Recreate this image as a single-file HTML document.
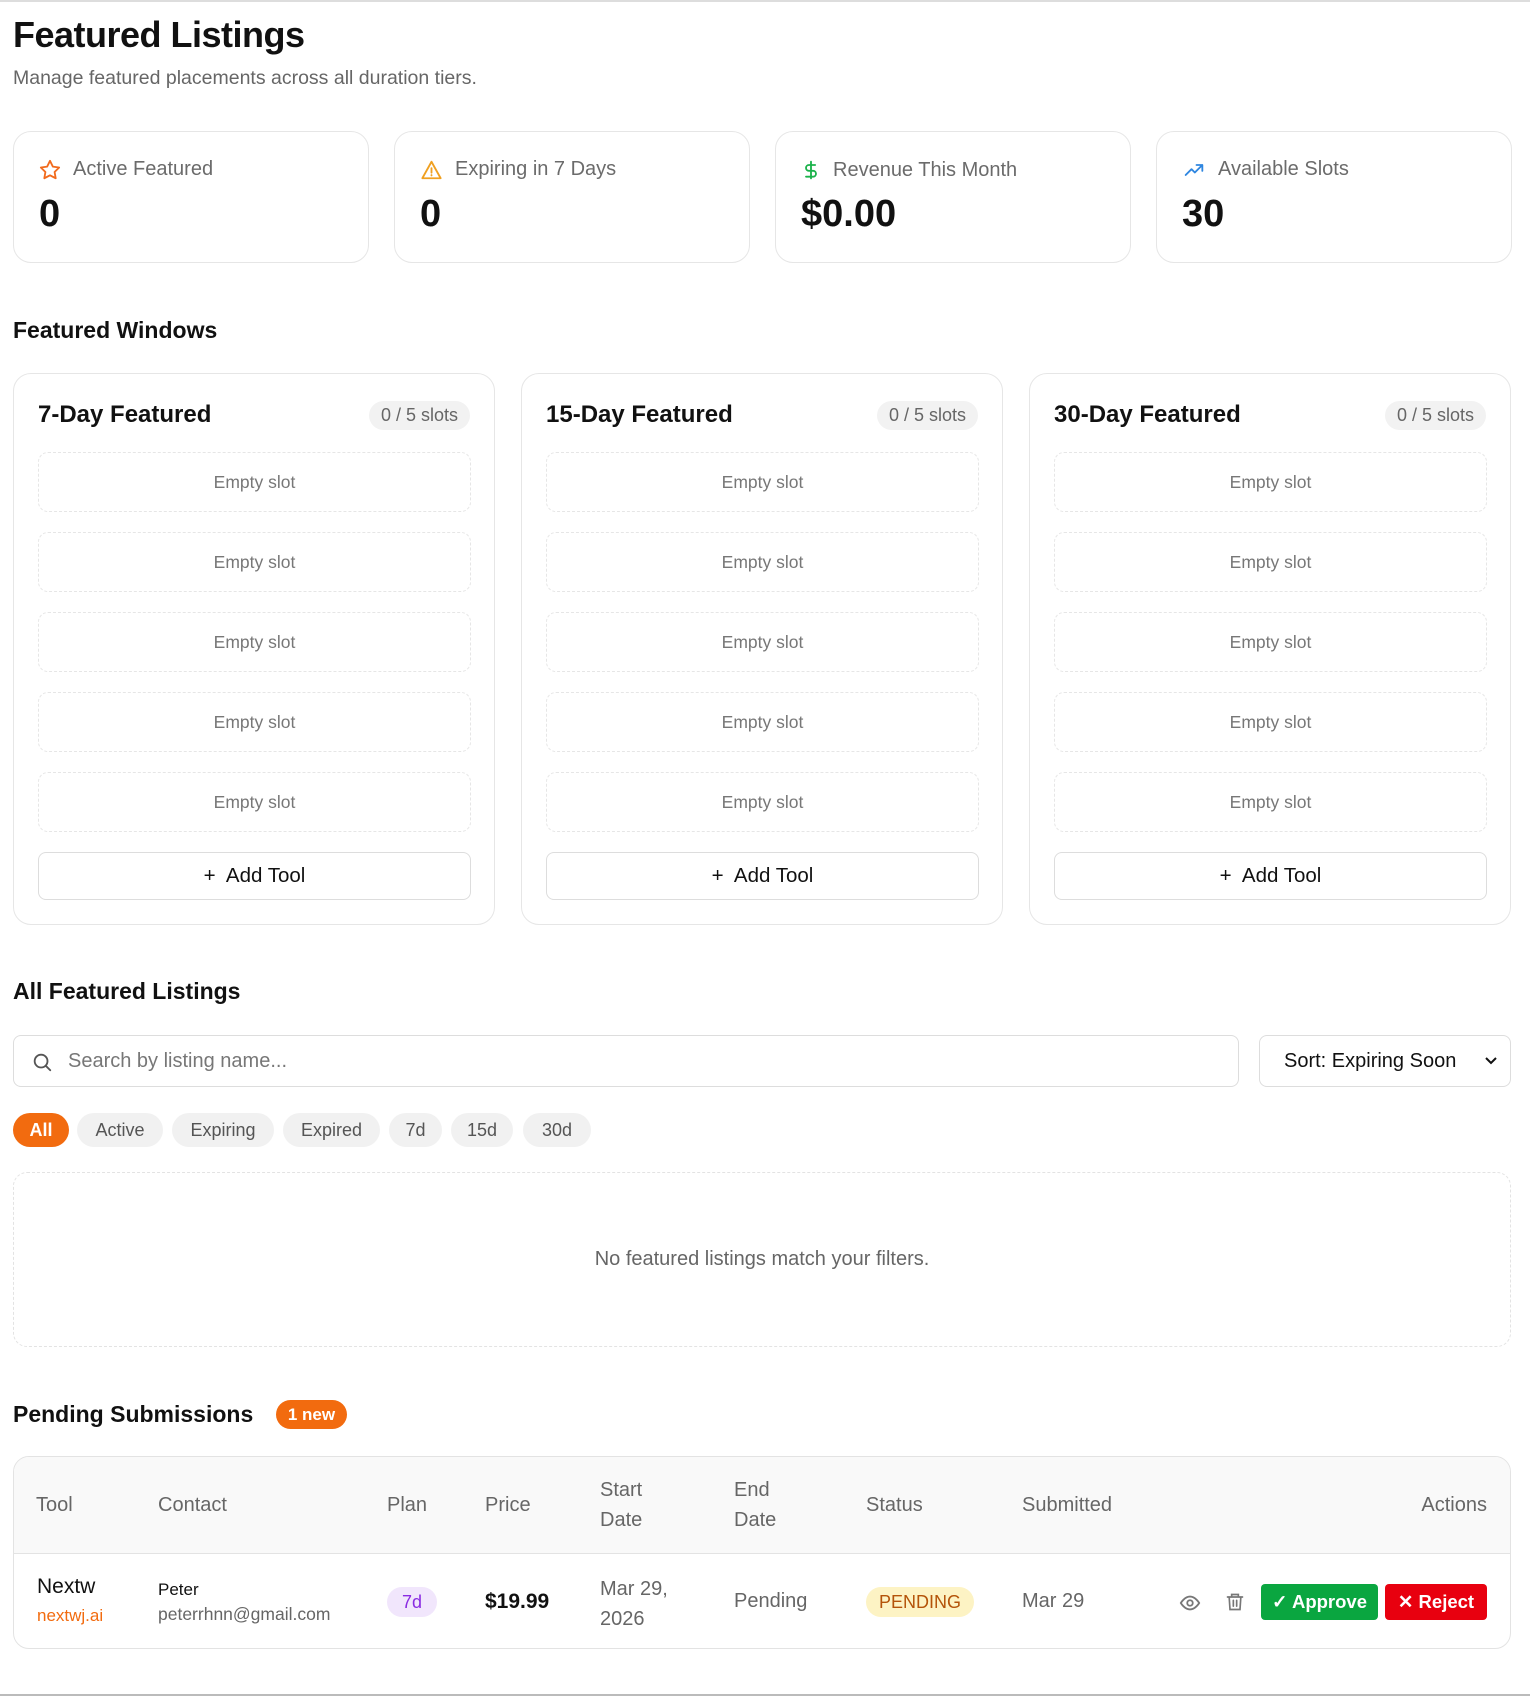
<!DOCTYPE html>
<html><head><meta charset="utf-8"><style>
*{box-sizing:border-box;margin:0;padding:0}
body{width:1530px;height:1694px;background:#fff;font-family:"Liberation Sans",sans-serif;color:#111;position:relative;overflow:hidden;border-top:2px solid #ddd}
.a{position:absolute}
h1{position:absolute;left:13px;top:12px;font-size:36px;font-weight:700;letter-spacing:-0.5px}
.sub{left:13px;top:65px;font-size:19.5px;color:#666}
.stat{position:absolute;top:129px;width:356px;height:132px;border:1px solid #e6e6e6;border-radius:18px}
.stat .l{position:absolute;left:25px;top:26px;font-size:20px;color:#6b6b6b;display:flex;align-items:center;gap:12px}
.stat .v{position:absolute;left:25px;top:61px;font-size:38px;font-weight:700}
.h2{font-size:23px;font-weight:700;left:13px}
.win{position:absolute;top:371px;width:482px;height:552px;border:1px solid #e6e6e6;border-radius:18px}
.win .t{position:absolute;left:24px;top:27px;font-size:24px;font-weight:700}
.win .p{position:absolute;right:24px;top:27px;height:29px;padding:0 12px;border-radius:15px;background:#f2f2f2;color:#666;font-size:18px;line-height:29px}
.slot{position:absolute;left:24px;width:433px;height:60px;border:1px dashed #e6e6e6;border-radius:10px;text-align:center;line-height:58px;color:#777;font-size:17.5px}
.add{position:absolute;left:24px;top:478px;width:433px;height:48px;border:1px solid #ddd;border-radius:8px;text-align:center;line-height:46px;font-size:20.5px;font-weight:500}
.chip{position:absolute;top:1111px;height:34px;border-radius:17px;background:#f1f1f1;color:#555;font-size:18px;line-height:34px;text-align:center}
.th{position:absolute;color:#666;font-size:20px;line-height:30px}
.td{position:absolute;font-size:20px}
</style></head><body>
<h1>Featured Listings</h1>
<div class="a sub">Manage featured placements across all duration tiers.</div>

<div class="stat" style="left:13px"><div class="l"><svg width="22" height="22" viewBox="0 0 24 24" fill="none" stroke="#f26b1d" stroke-width="2" stroke-linejoin="round"><path d="M12 2l3.1 6.3 6.9 1-5 4.9 1.2 6.8L12 17.8 5.8 21l1.2-6.8-5-4.9 6.9-1z"/></svg>Active Featured</div><div class="v">0</div></div>
<div class="stat" style="left:394px"><div class="l"><svg width="23" height="22" viewBox="0 0 24 24" fill="none" stroke="#f0a020" stroke-width="2" stroke-linejoin="round"><path d="M12 3L2 21h20z"/><path d="M12 10v5M12 17.5v.5" stroke-linecap="round"/></svg>Expiring in 7 Days</div><div class="v">0</div></div>
<div class="stat" style="left:775px"><div class="l"><svg width="20" height="24" viewBox="0 0 24 24" fill="none" stroke="#1bb24b" stroke-width="2.2" stroke-linecap="round"><path d="M12 2v20M17 6H9.5a3.5 3.5 0 000 7h5a3.5 3.5 0 010 7H6"/></svg>Revenue This Month</div><div class="v">$0.00</div></div>
<div class="stat" style="left:1156px"><div class="l"><svg width="24" height="20" viewBox="0 0 24 24" fill="none" stroke="#2f86e0" stroke-width="2.2" stroke-linecap="round" stroke-linejoin="round"><path d="M2 18l7-7 4 4 9-9M15 6h7v7"/></svg>Available Slots</div><div class="v">30</div></div>

<div class="a h2" style="top:315px">Featured Windows</div>

<div class="win" style="left:13px"><div class="t">7-Day Featured</div><div class="p">0 / 5 slots</div>
<div class="slot" style="top:78px">Empty slot</div><div class="slot" style="top:158px">Empty slot</div><div class="slot" style="top:238px">Empty slot</div><div class="slot" style="top:318px">Empty slot</div><div class="slot" style="top:398px">Empty slot</div>
<div class="add">+&nbsp; Add Tool</div></div>
<div class="win" style="left:521px"><div class="t">15-Day Featured</div><div class="p">0 / 5 slots</div>
<div class="slot" style="top:78px">Empty slot</div><div class="slot" style="top:158px">Empty slot</div><div class="slot" style="top:238px">Empty slot</div><div class="slot" style="top:318px">Empty slot</div><div class="slot" style="top:398px">Empty slot</div>
<div class="add">+&nbsp; Add Tool</div></div>
<div class="win" style="left:1029px"><div class="t">30-Day Featured</div><div class="p">0 / 5 slots</div>
<div class="slot" style="top:78px">Empty slot</div><div class="slot" style="top:158px">Empty slot</div><div class="slot" style="top:238px">Empty slot</div><div class="slot" style="top:318px">Empty slot</div><div class="slot" style="top:398px">Empty slot</div>
<div class="add">+&nbsp; Add Tool</div></div>

<div class="a h2" style="top:976px">All Featured Listings</div>
<div class="a" style="left:13px;top:1033px;width:1226px;height:52px;border:1px solid #ddd;border-radius:8px">
<svg class="a" style="left:17px;top:15px" width="22" height="22" viewBox="0 0 24 24" fill="none" stroke="#555" stroke-width="2" stroke-linecap="round"><circle cx="11" cy="11" r="7"/><path d="M21 21l-5-5"/></svg>
<div class="a" style="left:54px;top:14px;font-size:20px;color:#777">Search by listing name...</div></div>
<div class="a" style="left:1259px;top:1033px;width:252px;height:52px;border:1px solid #ddd;border-radius:8px;font-size:20px;line-height:50px;padding-left:24px">Sort: Expiring Soon
<svg class="a" style="right:12px;top:20px" width="14" height="10" viewBox="0 0 14 10" fill="none" stroke="#111" stroke-width="2"><path d="M2 2l5 5 5-5"/></svg></div>

<div class="chip" style="left:13px;width:56px;background:#f26b0f;color:#fff;font-weight:700">All</div>
<div class="chip" style="left:77px;width:86px">Active</div>
<div class="chip" style="left:172px;width:102px">Expiring</div>
<div class="chip" style="left:283px;width:97px">Expired</div>
<div class="chip" style="left:389px;width:53px">7d</div>
<div class="chip" style="left:451px;width:62px">15d</div>
<div class="chip" style="left:523px;width:68px">30d</div>

<div class="a" style="left:13px;top:1170px;width:1498px;height:175px;border:1px dashed #e3e3e3;border-radius:14px;text-align:center;line-height:173px;font-size:20px;color:#666">No featured listings match your filters.</div>

<div class="a h2" style="top:1399px">Pending Submissions</div>
<div class="a" style="left:276px;top:1398px;width:71px;height:29px;border-radius:15px;background:#f26b0f;color:#fff;font-size:17px;font-weight:700;text-align:center;line-height:29px">1 new</div>

<div class="a" style="left:13px;top:1454px;width:1498px;height:193px;border:1px solid #e3e3e3;border-radius:16px;overflow:hidden">
<div class="a" style="left:0;top:0;width:100%;height:97px;background:#f9f9f9;border-bottom:1px solid #e3e3e3"></div></div>
<div class="th" style="left:36px;top:1488px">Tool</div>
<div class="th" style="left:158px;top:1488px">Contact</div>
<div class="th" style="left:387px;top:1488px">Plan</div>
<div class="th" style="left:485px;top:1488px">Price</div>
<div class="th" style="left:600px;top:1473px">Start<br>Date</div>
<div class="th" style="left:734px;top:1473px">End<br>Date</div>
<div class="th" style="left:866px;top:1488px">Status</div>
<div class="th" style="left:1022px;top:1488px">Submitted</div>
<div class="th" style="right:43px;top:1488px">Actions</div>

<div class="td" style="left:37px;top:1573px;font-size:21px">Nextw</div>
<div class="td" style="left:37px;top:1604px;font-size:17px;color:#f26b0f">nextwj.ai</div>
<div class="td" style="left:158px;top:1578px;font-size:17px">Peter</div>
<div class="td" style="left:158px;top:1602px;font-size:17.5px;color:#666">peterrhnn@gmail.com</div>
<div class="td" style="left:387px;top:1585px;width:50px;height:30px;border-radius:15px;background:#f1e6fc;color:#8a2be2;font-size:18px;text-align:center;line-height:30px">7d</div>
<div class="td" style="left:485px;top:1588px;font-weight:700;font-size:21px">$19.99</div>
<div class="td" style="left:600px;top:1572px;color:#666;line-height:30px">Mar 29,<br>2026</div>
<div class="td" style="left:734px;top:1588px;color:#666">Pending</div>
<div class="td" style="left:866px;top:1585px;width:108px;height:30px;border-radius:15px;background:#fdf3c4;color:#b45309;font-size:18px;text-align:center;line-height:30px">PENDING</div>
<div class="td" style="left:1022px;top:1588px;color:#666">Mar 29</div>
<svg class="a" style="left:1179px;top:1590px" width="22" height="22" viewBox="0 0 24 24" fill="none" stroke="#777" stroke-width="2"><path d="M2 12s4-7 10-7 10 7 10 7-4 7-10 7S2 12 2 12z"/><circle cx="12" cy="12" r="3"/></svg>
<svg class="a" style="left:1225px;top:1589px" width="20" height="22" viewBox="0 0 24 24" fill="none" stroke="#777" stroke-width="2" stroke-linecap="round"><path d="M3 6h18M8 6V3h8v3M5 6l1 15h12l1-15M10 10v7M14 10v7"/></svg>
<div class="td" style="left:1261px;top:1582px;width:117px;height:36px;border-radius:4px;background:#0aa640;color:#fff;font-size:18.5px;font-weight:700;text-align:center;line-height:36px">✓ Approve</div>
<div class="td" style="left:1385px;top:1582px;width:102px;height:36px;border-radius:4px;background:#e8000f;color:#fff;font-size:18.5px;font-weight:700;text-align:center;line-height:36px">✕ Reject</div>
<div class="a" style="left:0;top:1692px;width:1530px;height:2px;background:#bbb"></div>
</body></html>
